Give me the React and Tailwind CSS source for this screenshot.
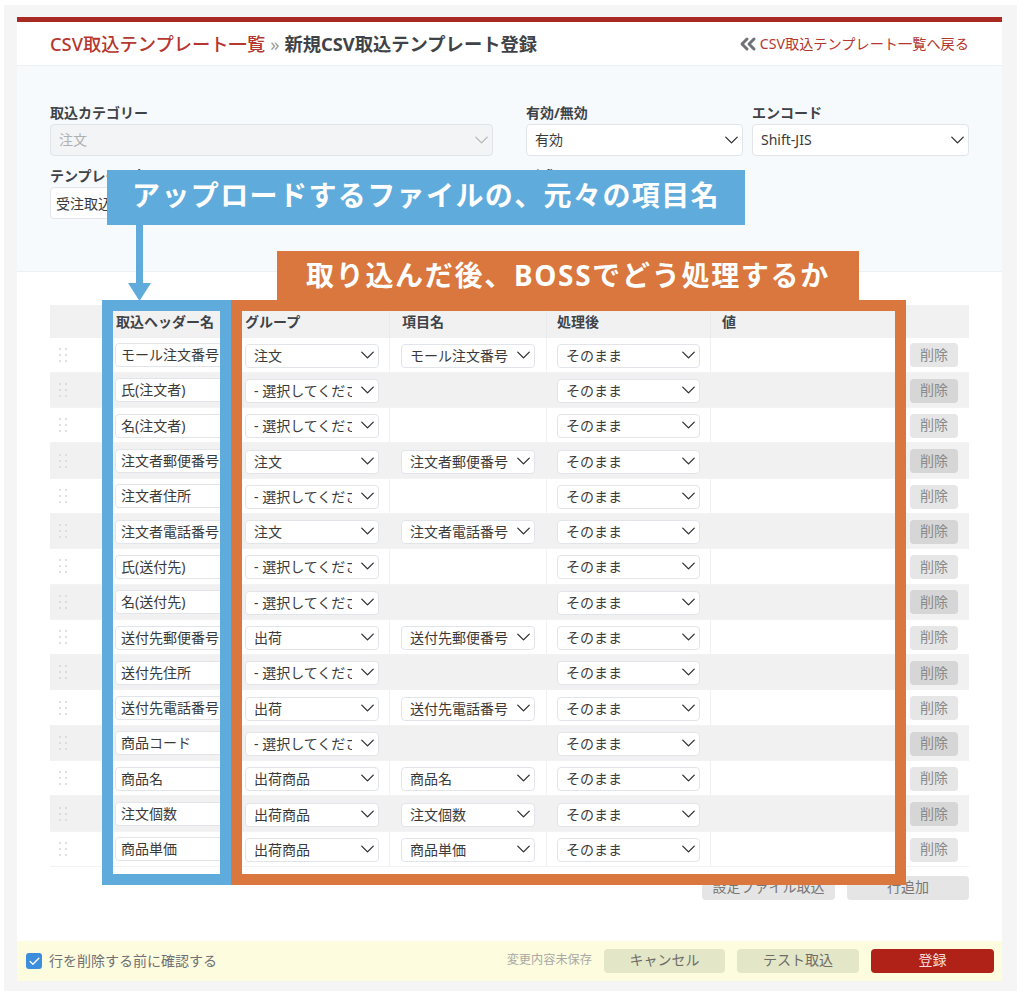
import { ChevronDown, ChevronsLeft, Check } from "lucide-react";

const rows = [
  ["モール注文番号", "注文", "モール注文番号"],
  ["氏(注文者)", "", ""],
  ["名(注文者)", "", ""],
  ["注文者郵便番号", "注文", "注文者郵便番号"],
  ["注文者住所", "", ""],
  ["注文者電話番号", "注文", "注文者電話番号"],
  ["氏(送付先)", "", ""],
  ["名(送付先)", "", ""],
  ["送付先郵便番号", "出荷", "送付先郵便番号"],
  ["送付先住所", "", ""],
  ["送付先電話番号", "出荷", "送付先電話番号"],
  ["商品コード", "", ""],
  ["商品名", "出荷商品", "商品名"],
  ["注文個数", "出荷商品", "注文個数"],
  ["商品単価", "出荷商品", "商品単価"],
];

const gridCols = "grid grid-cols-[57px_129px_154px_157px_164px_189px_69px]";

function Select({ value, className = "", disabled = false }) {
  return (
    <div className={`relative ${className}`}>
      <select
        disabled={disabled}
        defaultValue={value}
        className={`w-full h-full appearance-none rounded-[4px] border border-[#e1e5ea] pl-[8px] pr-[26px] pb-[2px] text-[14px] outline-none ${disabled ? "bg-[#f3f4f5] text-[#aeb0b2]" : "bg-white text-[#3a3a3a]"}`}
      >
        <option value={value}>{value}</option>
      </select>
      <ChevronDown
        size={23}
        strokeWidth={1.4}
        className={`absolute right-0 top-1/2 -translate-y-1/2 pointer-events-none ${disabled ? "text-[#b5b7ba]" : "text-[#333]"}`}
      />
    </div>
  );
}

function Field({ label, children, className = "" }) {
  return (
    <div className={className}>
      <div className="h-[20px] text-[14px] leading-[18px] font-bold text-[#3f4347]">{label}</div>
      {children}
    </div>
  );
}

function Grip() {
  return (
    <div className="grid grid-cols-2 gap-x-[4px] gap-y-[4px] w-[8px] ml-[9px]">
      {[0, 1, 2, 3, 4, 5].map((i) => (
        <span key={i} className="w-[2px] h-[2px] rounded-full bg-[#d4d6d8]"></span>
      ))}
    </div>
  );
}

function Row({ row, striped }) {
  const [name, group, item] = row;
  return (
    <div className={`${gridCols} h-[35.3px] items-center border-b border-[#f3f3f4] ${striped ? "bg-[#f1f1f1]" : "bg-white"}`}>
      <Grip />
      <div className="pl-[8px] pr-[8px]">
        <input
          readOnly
          value={name}
          className="w-full h-[24px] rounded-[4px] border border-[#e1e5ea] bg-white pl-[5px] pb-[2px] text-[14px] text-[#3a3a3a] outline-none"
        />
      </div>
      <div className="pl-[9px] pr-[10px] h-full flex items-center border-r border-[#f0f1f2]">
        <Select value={group || "- 選択してください"} className="w-full h-[24px]" />
      </div>
      <div className="pl-[11px] pr-[11px] h-full flex items-center border-r border-[#f0f1f2]">
        {item ? <Select value={item} className="w-full h-[24px]" /> : null}
      </div>
      <div className="pl-[10px] pr-[10px] h-full flex items-center border-r border-[#f0f1f2]">
        <Select value="そのまま" className="w-full h-[24px]" />
      </div>
      <div></div>
      <div className="pl-[10px]">
        <button className={`w-[48px] h-[24px] rounded-[4px] pb-[2px] text-[14px] text-[#8a8a8a] ${striped ? "bg-[#d6d6d6]" : "bg-[#e6e6e6]"}`}>削除</button>
      </div>
    </div>
  );
}

export default function App() {
  return (
    <div className="relative w-[1024px] h-[998px] overflow-hidden bg-white font-['Noto_Sans','Noto_Sans_CJK_JP',sans-serif]">
      <div className="ml-[4px] mt-[5px] w-[1013px] h-[986px] bg-[#f5f5f5] pt-[12px] pl-[13px]">
        <div className="w-[985px] h-[964px] flex flex-col bg-white border-t-[5px] border-[#a92a22]">
          <header className="h-[44px] shrink-0 flex items-center justify-between pl-[33px] pr-[33px] border-b border-[#eef1f3]">
            <h1 className="text-[18.3px] font-bold text-[#3f4347] whitespace-nowrap">
              <a href="#" className="font-medium text-[#b5372f]">CSV取込テンプレート一覧</a>
              <span className="mx-[5px] font-normal text-[#9a9da0]">»</span>
              新規CSV取込テンプレート登録
            </h1>
            <a href="#" className="flex items-center text-[14.2px] text-[#b5372f] whitespace-nowrap">
              <ChevronsLeft size={24} strokeWidth={3} className="text-[#6f7377]" />
              CSV取込テンプレート一覧へ戻る
            </a>
          </header>

          <section className="h-[206px] shrink-0 bg-[#f6fafd] border-b border-[#edf0f2] pl-[33px] pt-[38px]">
            <div className="flex h-[62px]">
              <Field label="取込カテゴリー" className="w-[443px]">
                <Select value="注文" disabled className="h-[32px]" />
              </Field>
              <Field label="有効/無効" className="w-[217px] ml-[33px]">
                <Select value="有効" className="h-[32px]" />
              </Field>
              <Field label="エンコード" className="w-[217px] ml-[9px]">
                <Select value="Shift-JIS" className="h-[32px]" />
              </Field>
            </div>
            <div className="flex pt-[1px]">
              <Field label="テンプレート名" className="w-[443px]">
                <input
                  readOnly
                  value="受注取込"
                  className="w-full h-[32px] rounded-[4px] border border-[#e1e5ea] bg-white pl-[5px] text-[14px] text-[#3a3a3a] outline-none"
                />
              </Field>
              <Field label="形式" className="w-[217px] ml-[33px]"></Field>
            </div>
          </section>

          <div className="ml-[33px] mt-[33px] w-[919px]">
            <div className={`${gridCols} h-[32.5px] items-center bg-[#f1f1f2] text-[14px] font-bold text-[#3f4347]`}>
              <div></div>
              <div className="pl-[9px]">取込ヘッダー名</div>
              <div className="pl-[9px] h-full flex items-center border-r border-[#e9eaec]">グループ</div>
              <div className="pl-[12px] h-full flex items-center border-r border-[#e9eaec]">項目名</div>
              <div className="pl-[10px] h-full flex items-center border-r border-[#e9eaec]">処理後</div>
              <div className="pl-[11px]">値</div>
              <div></div>
            </div>
            {rows.map((row, i) => (
              <Row key={row[0]} row={row} striped={i % 2 === 1} />
            ))}
            <div className="flex justify-end gap-[12px] mt-[9px]">
              <button className="w-[133px] h-[24px] rounded-[4px] bg-[#e5e5e5] pb-[2px] text-[14px] text-[#777]">設定ファイル取込</button>
              <button className="w-[122px] h-[24px] rounded-[4px] bg-[#e5e5e5] pb-[2px] text-[14px] text-[#777]">行追加</button>
            </div>
          </div>

          <footer className="mt-auto h-[40px] shrink-0 flex items-center bg-[#fdfcde] pl-[9px] pr-[8px]">
            <span className="w-[16px] h-[16px] rounded-[3px] bg-[#3d8fdd] flex items-center justify-center">
              <Check size={13} strokeWidth={2.5} className="text-white" />
            </span>
            <span className="ml-[7px] pb-[2px] text-[14px] text-[#6f7174]">行を削除する前に確認する</span>
            <span className="ml-auto mr-[12px] pb-[1px] text-[12.2px] text-[#a9aaa6]">変更内容未保存</span>
            <button className="w-[121px] h-[24px] rounded-[4px] bg-[#e4e6c8] pb-[3px] text-[14px] text-[#6c6e66]">キャンセル</button>
            <button className="w-[122px] h-[24px] ml-[12px] rounded-[4px] bg-[#e4e6c8] pb-[3px] text-[14px] text-[#6c6e66]">テスト取込</button>
            <button className="w-[123px] h-[24px] ml-[12px] rounded-[4px] bg-[#b02118] pb-[3px] text-[14px] text-[#f3dcd8]">登録</button>
          </footer>
        </div>
      </div>

      {/* annotations laid over the screenshot */}
      <div className="absolute left-[102px] top-[300px] w-[129px] h-[585px] border-[11px] border-[#5fabdc]"></div>
      <div className="absolute left-[231px] top-[300px] w-[675px] h-[585px] border-[11px] border-[#d9773e]"></div>
      <div className="absolute left-[277px] top-[251px] w-[582px] h-[50px] bg-[#d9773e] flex items-center pl-[29px] pb-[2px] text-[28px] font-bold tracking-[1.7px] text-white whitespace-nowrap">
        取り込んだ後、BOSSでどう処理するか
      </div>
      <div className="absolute left-[107px] top-[170px] w-[638px] h-[55px] bg-[#5fabdc] flex items-center pl-[25px] pb-[5px] text-[28px] font-bold tracking-[1.4px] text-white whitespace-nowrap">
        アップロードするファイルの、元々の項目名
      </div>
      <div className="absolute left-[136px] top-[225px] w-[7px] h-[60px] bg-[#5fabdc]"></div>
      <svg className="absolute left-[128px] top-[283px]" width="23" height="18" viewBox="0 0 23 18">
        <path d="M0 0H23L11.5 18Z" fill="#5fabdc" />
      </svg>
    </div>
  );
}
